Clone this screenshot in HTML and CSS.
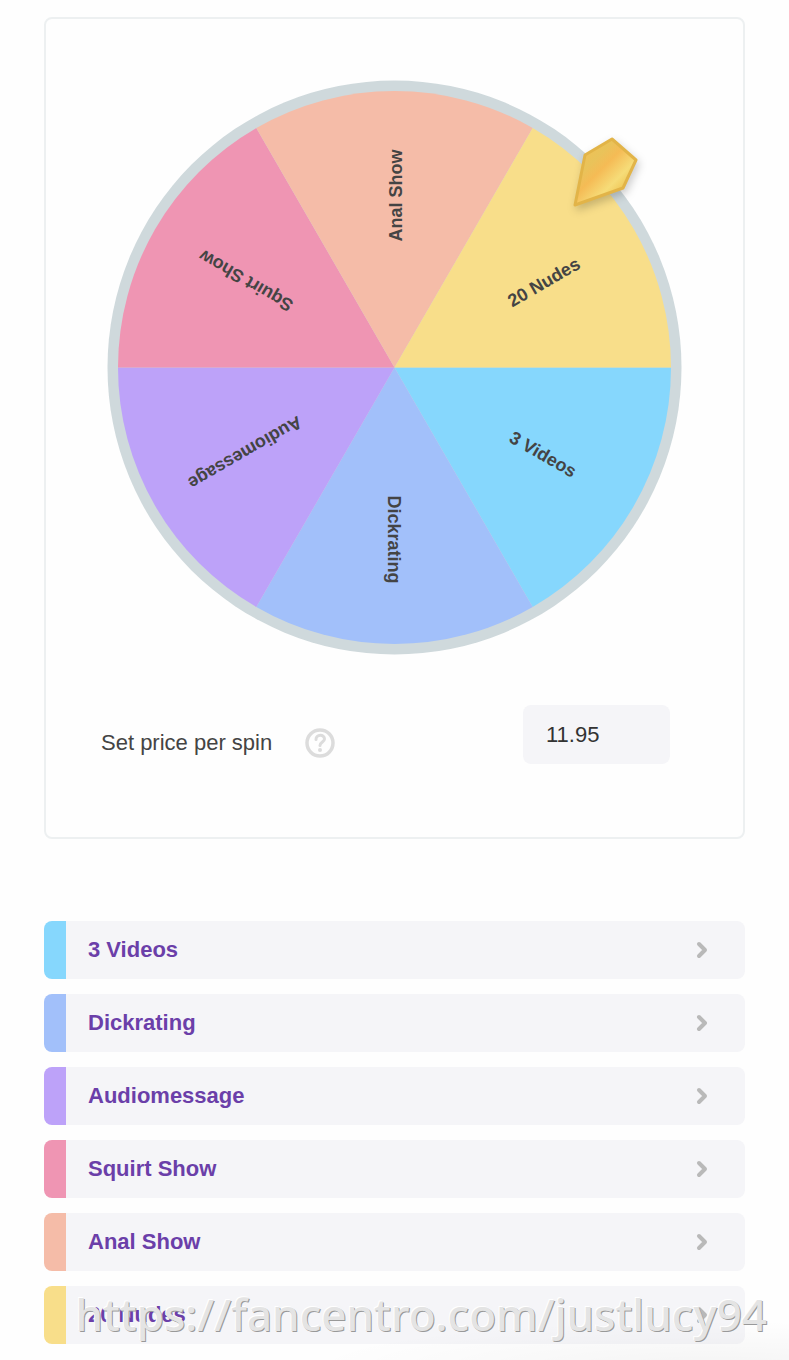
FILE: index.html
```html
<!DOCTYPE html>
<html lang="en">
<head>
  <meta charset="UTF-8" />
  <meta name="viewport" content="width=device-width, initial-scale=1.0"/>
  <title>Spin the wheel</title>
  <link rel="stylesheet" href="styles.css">
</head>
<body>

<main class="page">
  <section class="card">
    <svg class="wheel" viewBox="0 0 575 575" role="img" aria-label="Prize wheel">
      <defs>
        <linearGradient id="gold" gradientUnits="userSpaceOnUse" x1="478" y1="68" x2="520" y2="110">
          <stop offset="0" stop-color="#f0c055"/>
          <stop offset="0.25" stop-color="#e9c35a"/>
          <stop offset="0.45" stop-color="#f5bb55"/>
          <stop offset="0.75" stop-color="#f6dc78"/>
          <stop offset="1" stop-color="#edc24f"/>
        </linearGradient>
      </defs>
      <circle cx="287.5" cy="287.5" r="287" fill="#cfd9dc"/>
      <!-- slices, clockwise from the right -->
      <path fill="#86d7fd" d="M287.5 287.5H564A276.5 276.5 0 0 1 425.7 527Z"/>
      <path fill="#a2c0fa" d="M287.5 287.5L425.7 527A276.5 276.5 0 0 1 149.3 527Z"/>
      <path fill="#bda2f9" d="M287.5 287.5L149.3 527A276.5 276.5 0 0 1 11 287.5Z"/>
      <path fill="#ef95b3" d="M287.5 287.5H11A276.5 276.5 0 0 1 149.3 48Z"/>
      <path fill="#f5bca8" d="M287.5 287.5L149.3 48A276.5 276.5 0 0 1 425.7 48Z"/>
      <path fill="#f8de8a" d="M287.5 287.5L425.7 48A276.5 276.5 0 0 1 564 287.5Z"/>
      <g class="slice-labels" transform="translate(287.5 287.5)">
        <text x="172" y="7" transform="rotate(30)">3 Videos</text>
        <text x="172" y="7" transform="rotate(90)">Dickrating</text>
        <text x="172" y="7" transform="rotate(150)">Audiomessage</text>
        <text x="172" y="7" transform="rotate(210)">Squirt Show</text>
        <text x="172" y="7" transform="rotate(270)">Anal Show</text>
        <text x="172" y="7" transform="rotate(330)">20 Nudes</text>
      </g>
      <path class="pointer" d="M505 59L529 80L516 108L468 125L478 75Z"/>
    </svg>

    <div class="price">
      <div class="price-label">
        <label for="price">Set price per spin</label>
        <button class="help" type="button" aria-label="Help">
          <svg viewBox="0 0 30 30" width="30" height="30" fill="none" stroke="#dcdcdc">
            <circle cx="15" cy="15" r="13" stroke-width="3.5"/>
            <path d="M11 11.5C11 6 19.5 6 19.5 11C19.5 14 15 14 15 17.5" stroke-width="3" stroke-linecap="round"/>
            <circle cx="15" cy="22" r="2" fill="#dcdcdc" stroke="none"/>
          </svg>
        </button>
      </div>
      <input class="price-input" id="price" type="text" value="11.95">
    </div>
  </section>

  <nav class="prizes">
    <a class="prize sky" href="#">3 Videos
      <svg class="chevron" viewBox="0 0 12 18"><path d="M3 3L9 9L3 15"/></svg></a>
    <a class="prize blue" href="#">Dickrating
      <svg class="chevron" viewBox="0 0 12 18"><path d="M3 3L9 9L3 15"/></svg></a>
    <a class="prize violet" href="#">Audiomessage
      <svg class="chevron" viewBox="0 0 12 18"><path d="M3 3L9 9L3 15"/></svg></a>
    <a class="prize pink" href="#">Squirt Show
      <svg class="chevron" viewBox="0 0 12 18"><path d="M3 3L9 9L3 15"/></svg></a>
    <a class="prize peach" href="#">Anal Show
      <svg class="chevron" viewBox="0 0 12 18"><path d="M3 3L9 9L3 15"/></svg></a>
    <a class="prize yellow" href="#">20 Nudes
      <svg class="chevron" viewBox="0 0 12 18"><path d="M3 3L9 9L3 15"/></svg></a>
  </nav>
  <div class="watermark">https://fancentro.com/justlucy94</div>
</main>

</body>
</html>
```

FILE: styles.css
```css
* {
  box-sizing: border-box;
}
body {
  margin: 0;
  background: #fefefe;
  font-family: "Liberation Sans", Arial, sans-serif;
  font-size: 22px;
  color: #444;
}
.page {
  position: relative;
  padding: 17px 44px 16px;
}
.card {
  border: 2px solid #edf0f1;
  border-radius: 8px;
  padding: 61px 0 73px;
}

/* wheel */
.wheel {
  display: block;
  width: calc(100% - 122px);
  margin: 0 auto;
  overflow: visible;
}
.slice-labels {
  font-size: 18px;
  font-weight: bold;
  fill: #444;
  text-anchor: middle;
}
.pointer {
  fill: url(#gold);
  stroke: #e2b448;
  stroke-width: 3px;
  stroke-linejoin: round;
  filter: drop-shadow(2px 4px 4px rgba(0, 0, 0, 0.2));
}

/* price */
.price {
  display: flex;
  justify-content: space-between;
  align-items: flex-end;
  margin-top: 50px;
  padding: 0 73px 0 55px;
}
.price-label {
  display: flex;
  align-items: center;
  gap: 33px;
  padding-bottom: 6px;
}
.help {
  display: block;
  width: 30px;
  height: 30px;
  padding: 0;
  border: 0;
  background: none;
}
.price-input {
  width: 147px;
  height: 59px;
  padding: 0 23px;
  border: 0;
  border-radius: 8px;
  background: #f5f5f8;
  font: inherit;
  color: #333;
}

/* prize list */
.prizes {
  display: flex;
  flex-direction: column;
  gap: 15px;
  margin-top: 82px;
}
.prize {
  display: flex;
  align-items: center;
  justify-content: space-between;
  height: 58px;
  padding: 0 37px 0 22px;
  border-left: 22px solid;
  border-radius: 8px;
  background: #f5f5f8;
  color: #6b3fa9;
  font-weight: bold;
  text-decoration: none;
}
.sky { border-left-color: #86d7fd; }
.blue { border-left-color: #a2c0fa; }
.violet { border-left-color: #bda2f9; }
.pink { border-left-color: #ef95b3; }
.peach { border-left-color: #f5bca8; }
.yellow { border-left-color: #f8de8a; }
.chevron {
  width: 12px;
  height: 18px;
  fill: none;
  stroke: #b9b9b9;
  stroke-width: 4px;
  stroke-linecap: round;
  stroke-linejoin: round;
}

.watermark {
  position: absolute;
  right: 0;
  bottom: 0;
  left: 0;
  padding: 0 22px 16px;
  background: radial-gradient(ellipse at 90% 110%, rgba(0, 0, 0, 0.04), transparent 40%);
  font-family: "Noto Sans", sans-serif;
  font-size: 44px;
  font-weight: 500;
  line-height: 60px;
  text-align: right;
  color: #e4e4e4;
  text-shadow: 1px 1px 0 #999, -1px -1px 0 #fff;
  pointer-events: none;
}
```
